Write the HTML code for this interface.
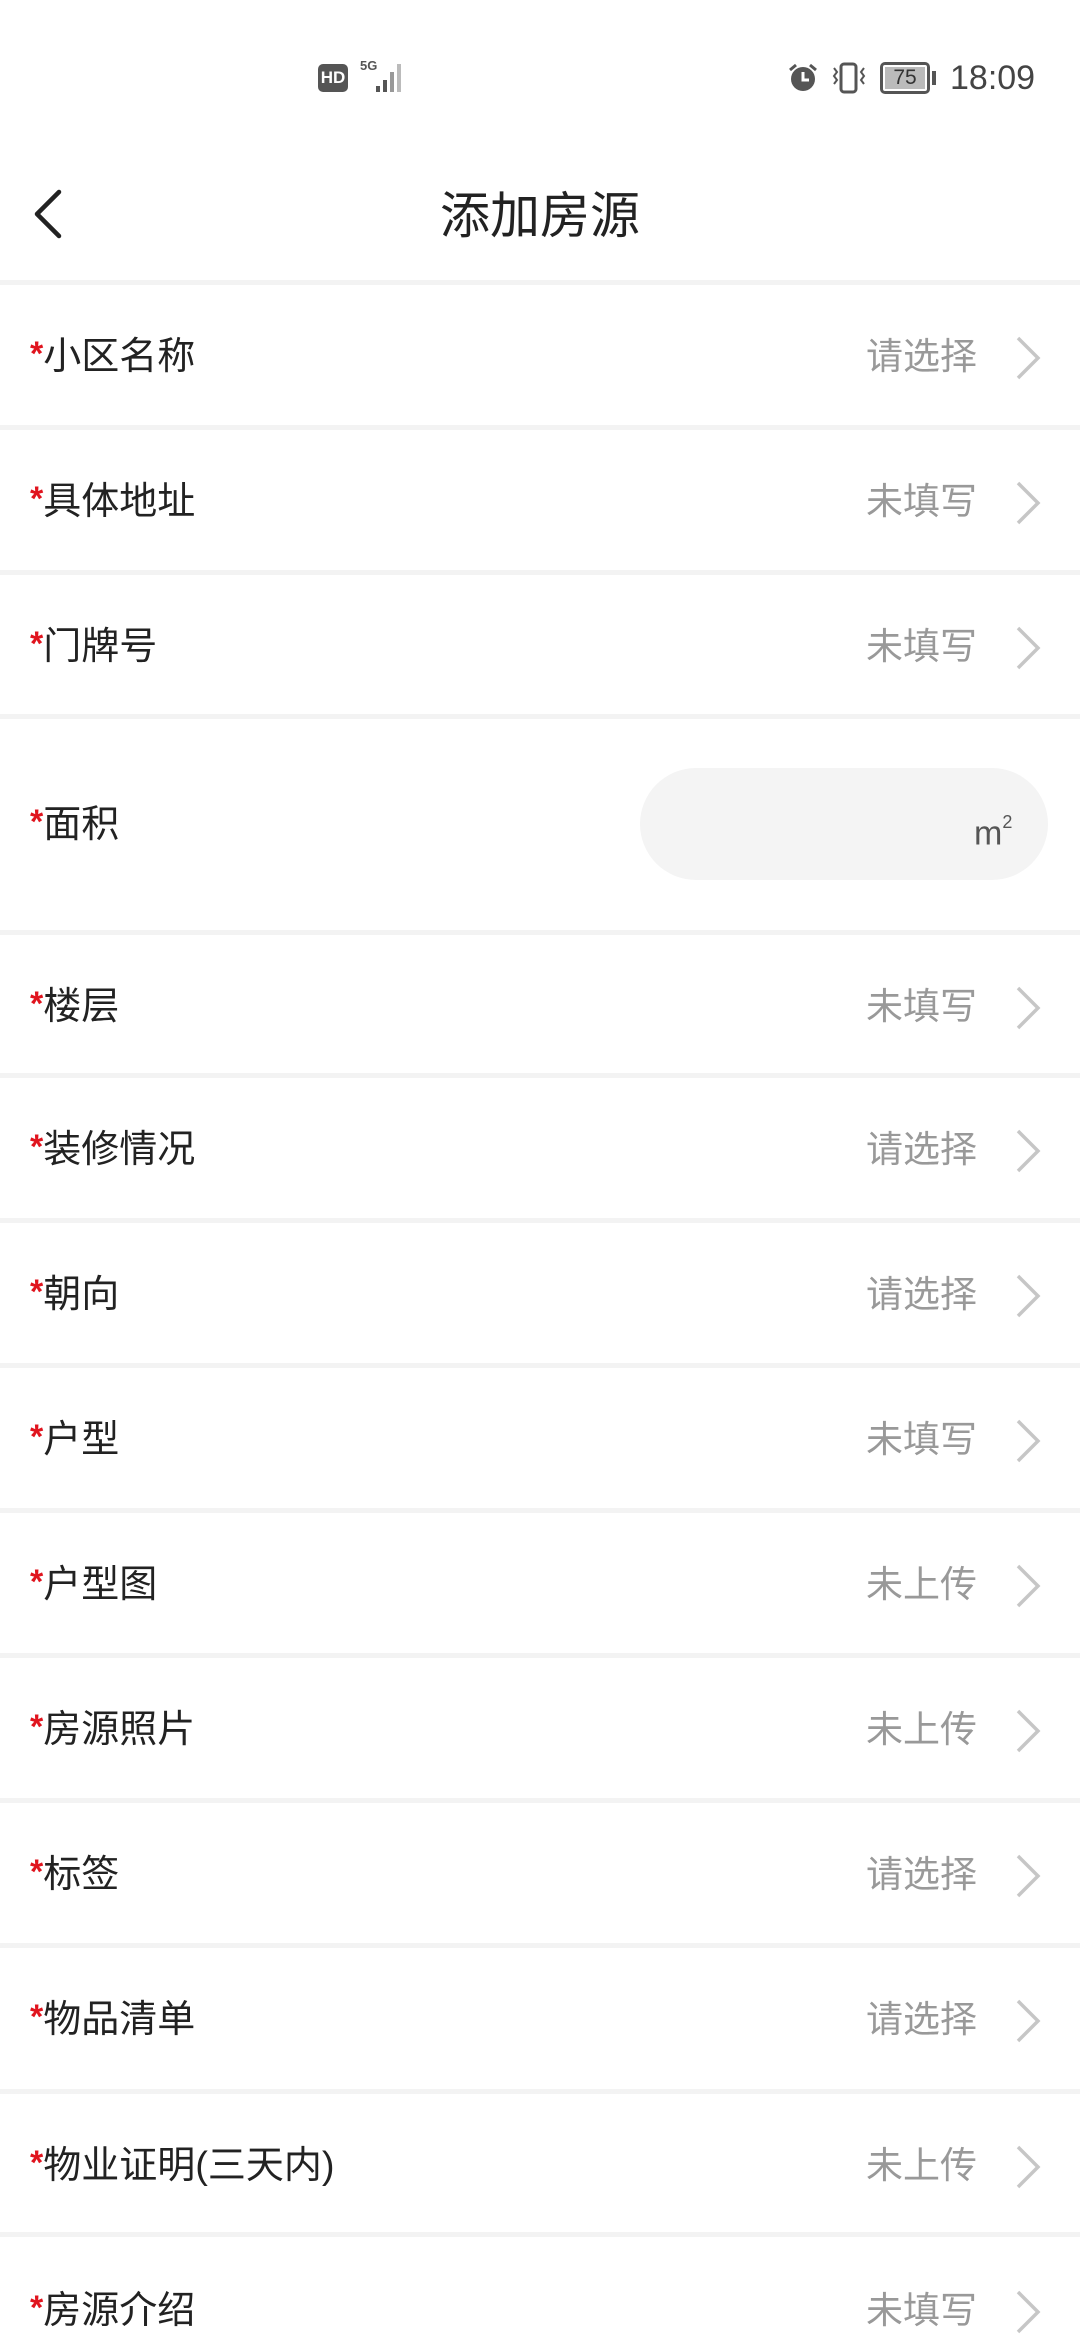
<!DOCTYPE html>
<html><head><meta charset="utf-8"><style>
*{margin:0;padding:0;box-sizing:border-box}
body{width:1080px;height:2340px;background:#fff;position:relative;overflow:hidden;font-family:"Liberation Sans","Noto Sans CJK SC",sans-serif}
.a{position:absolute}
.div{position:absolute;left:0;width:1080px;height:5px;background:#f3f3f3}
.lab{position:absolute;left:30px;font-size:38px;color:#222;line-height:40px;margin-top:-1px}
.lab b{color:#e0141e;font-weight:bold;font-size:34px;position:relative;top:-4px}
.val{position:absolute;right:103px;font-size:37px;color:#999;line-height:40px;margin-top:-1px}
.chev{position:absolute;left:1014px;width:28px;height:44px}
</style></head><body>
<div class="a" style="left:318px;top:64px;width:30px;height:28px;background:#555;border-radius:5px;color:#fff;font-size:17px;font-weight:bold;line-height:28px;text-align:center">HD</div>
<div class="a" style="left:360px;top:58px;font-size:13px;font-weight:bold;color:#555">5G</div>
<svg class="a" style="left:358px;top:62px" width="50" height="32"><rect x="18" y="24" width="4" height="6" fill="#555"/><rect x="25" y="18" width="4" height="12" fill="#555"/><rect x="32" y="10" width="4" height="20" fill="#999"/><rect x="39" y="2" width="4" height="28" fill="#bbb"/></svg>
<svg class="a" style="left:786px;top:62px" width="36" height="32"><circle cx="17" cy="17" r="12" fill="#555"/><path d="M17 10v8h6" stroke="#fff" stroke-width="3" fill="none"/><path d="M4 8l6-5M30 8l-6-5" stroke="#555" stroke-width="3"/></svg>
<svg class="a" style="left:830px;top:62px" width="40" height="32"><rect x="11" y="2" width="15" height="28" rx="3" fill="none" stroke="#555" stroke-width="3"/><path d="M4 6l3 4-3 4 3 4-3 4M34 6l-3 4 3 4-3 4 3 4" stroke="#555" stroke-width="2" fill="none"/></svg>
<div class="a" style="left:880px;top:62px;width:50px;height:32px;border:3px solid #555;border-radius:5px;background:#fff"><div style="margin:2px;height:22px;background:#bbb;font-size:21px;line-height:22px;text-align:center;color:#333">75</div></div>
<div class="a" style="left:932px;top:71px;width:4px;height:14px;background:#555"></div>
<div class="a" style="left:950px;top:58px;font-size:34px;color:#444;line-height:40px">18:09</div>
<svg class="a" style="left:26px;top:188px" width="40" height="52"><path d="M33 4L11 26l22 22" stroke="#222" stroke-width="4.5" fill="none" stroke-linecap="round" stroke-linejoin="round"/></svg>
<div class="a" style="left:0;width:1080px;top:186px;text-align:center;font-size:50px;color:#222;line-height:60px">添加房源</div>
<div class="div" style="top:280px"></div>

<div class="lab" style="top:338px"><b>*</b>小区名称</div><div class="val" style="top:338px">请选择</div><svg class="chev" style="top:336px"><path d="M4 2l20 20-20 20" stroke="#c6c6c6" stroke-width="3.5" fill="none"/></svg>
<div class="div" style="top:425px"></div>
<div class="lab" style="top:483px"><b>*</b>具体地址</div><div class="val" style="top:483px">未填写</div><svg class="chev" style="top:481px"><path d="M4 2l20 20-20 20" stroke="#c6c6c6" stroke-width="3.5" fill="none"/></svg>
<div class="div" style="top:570px"></div>
<div class="lab" style="top:628px"><b>*</b>门牌号</div><div class="val" style="top:628px">未填写</div><svg class="chev" style="top:626px"><path d="M4 2l20 20-20 20" stroke="#c6c6c6" stroke-width="3.5" fill="none"/></svg>
<div class="div" style="top:714px"></div>
<div class="lab" style="top:806px"><b>*</b>面积</div>
<div class="a" style="left:640px;top:768px;width:408px;height:112px;background:#f4f4f4;border-radius:56px"></div>
<div class="a" style="left:974px;top:806px;font-size:34px;color:#555;line-height:40px">m<sup style="font-size:18px;position:relative;top:-4px">2</sup></div>
<div class="div" style="top:930px"></div>
<div class="lab" style="top:988px"><b>*</b>楼层</div><div class="val" style="top:988px">未填写</div><svg class="chev" style="top:986px"><path d="M4 2l20 20-20 20" stroke="#c6c6c6" stroke-width="3.5" fill="none"/></svg>
<div class="div" style="top:1073px"></div>
<div class="lab" style="top:1131px"><b>*</b>装修情况</div><div class="val" style="top:1131px">请选择</div><svg class="chev" style="top:1129px"><path d="M4 2l20 20-20 20" stroke="#c6c6c6" stroke-width="3.5" fill="none"/></svg>
<div class="div" style="top:1218px"></div>
<div class="lab" style="top:1276px"><b>*</b>朝向</div><div class="val" style="top:1276px">请选择</div><svg class="chev" style="top:1274px"><path d="M4 2l20 20-20 20" stroke="#c6c6c6" stroke-width="3.5" fill="none"/></svg>
<div class="div" style="top:1363px"></div>
<div class="lab" style="top:1421px"><b>*</b>户型</div><div class="val" style="top:1421px">未填写</div><svg class="chev" style="top:1419px"><path d="M4 2l20 20-20 20" stroke="#c6c6c6" stroke-width="3.5" fill="none"/></svg>
<div class="div" style="top:1508px"></div>
<div class="lab" style="top:1566px"><b>*</b>户型图</div><div class="val" style="top:1566px">未上传</div><svg class="chev" style="top:1564px"><path d="M4 2l20 20-20 20" stroke="#c6c6c6" stroke-width="3.5" fill="none"/></svg>
<div class="div" style="top:1653px"></div>
<div class="lab" style="top:1711px"><b>*</b>房源照片</div><div class="val" style="top:1711px">未上传</div><svg class="chev" style="top:1709px"><path d="M4 2l20 20-20 20" stroke="#c6c6c6" stroke-width="3.5" fill="none"/></svg>
<div class="div" style="top:1798px"></div>
<div class="lab" style="top:1856px"><b>*</b>标签</div><div class="val" style="top:1856px">请选择</div><svg class="chev" style="top:1854px"><path d="M4 2l20 20-20 20" stroke="#c6c6c6" stroke-width="3.5" fill="none"/></svg>
<div class="div" style="top:1943px"></div>
<div class="lab" style="top:2001px"><b>*</b>物品清单</div><div class="val" style="top:2001px">请选择</div><svg class="chev" style="top:1999px"><path d="M4 2l20 20-20 20" stroke="#c6c6c6" stroke-width="3.5" fill="none"/></svg>
<div class="div" style="top:2089px"></div>
<div class="lab" style="top:2147px"><b>*</b>物业证明(三天内)</div><div class="val" style="top:2147px">未上传</div><svg class="chev" style="top:2145px"><path d="M4 2l20 20-20 20" stroke="#c6c6c6" stroke-width="3.5" fill="none"/></svg>
<div class="div" style="top:2232px"></div>
<div class="lab" style="top:2292px"><b>*</b>房源介绍</div><div class="val" style="top:2292px">未填写</div><svg class="chev" style="top:2290px"><path d="M4 2l20 20-20 20" stroke="#c6c6c6" stroke-width="3.5" fill="none"/></svg>
</body></html>
